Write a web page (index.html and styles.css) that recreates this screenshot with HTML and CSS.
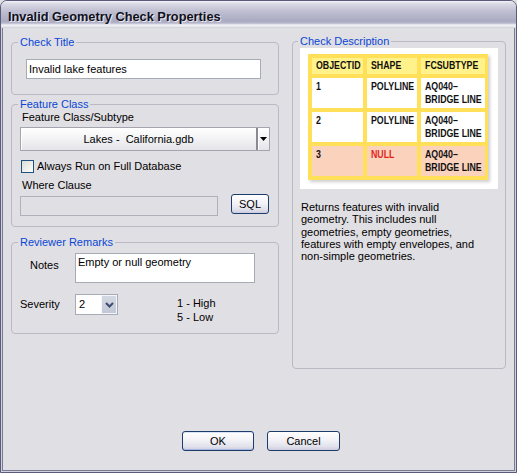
FILE: index.html
```html
<!DOCTYPE html>
<html>
<head>
<meta charset="utf-8">
<link rel="stylesheet" href="styles.css">
</head>
<body>
<div class="window">
  <div class="titlebar"><span class="title">Invalid Geometry Check Properties</span></div>
  <div class="content">
    <div class="main">
      <div class="left">
        <fieldset class="group g-title">
          <legend>Check Title</legend>
          <div class="textbox title-box">Invalid lake features</div>
        </fieldset>
        <fieldset class="group g-fc">
          <legend>Feature Class</legend>
          <div class="label fc-label">Feature Class/Subtype</div>
          <div class="combo">
            <div class="combo-main">Lakes -&nbsp; California.gdb</div>
            <div class="combo-arrow"><svg width="7" height="4" viewBox="0 0 7 4"><path d="M0 0h7L3.5 4z" fill="#000"/></svg></div>
          </div>
          <div class="check-row"><span class="checkbox"></span><span class="check-label">Always Run on Full Database</span></div>
          <div class="label where-label">Where Clause</div>
          <div class="where-row"><div class="textbox disabled"></div><div class="btn sql">SQL</div></div>
        </fieldset>
        <fieldset class="group g-rr">
          <legend>Reviewer Remarks</legend>
          <div class="notes-row"><span class="label notes-label">Notes</span><div class="textbox notes">Empty or null geometry</div></div>
          <div class="sev-row">
            <span class="label sev-label">Severity</span>
            <div class="select"><span class="select-val">2</span><span class="select-btn"><svg width="9" height="6" viewBox="0 0 9 6"><path d="M1 1l3.5 3.5L8 1" fill="none" stroke="#3c4c6c" stroke-width="2"/></svg></span></div>
            <div class="scale"><div>1 - High</div><div>5 - Low</div></div>
          </div>
        </fieldset>
      </div>
      <div class="right">
        <fieldset class="group g-desc">
          <legend>Check Description</legend>
          <div class="pic">
            <div class="ytable">
              <div class="yc h"><span class="yt">OBJECTID</span></div><div class="yc h"><span class="yt">SHAPE</span></div><div class="yc h"><span class="yt">FCSUBTYPE</span></div>
              <div class="yc"><span class="yt">1</span></div><div class="yc"><span class="yt">POLYLINE</span></div><div class="yc"><span class="yt">AQ040–<br>BRIDGE LINE</span></div>
              <div class="yc"><span class="yt">2</span></div><div class="yc"><span class="yt">POLYLINE</span></div><div class="yc"><span class="yt">AQ040–<br>BRIDGE LINE</span></div>
              <div class="yc n"><span class="yt">3</span></div><div class="yc n red"><span class="yt">NULL</span></div><div class="yc n"><span class="yt">AQ040–<br>BRIDGE LINE</span></div>
            </div>
          </div>
          <p class="desc">Returns features with invalid<br>geometry. This includes null<br>geometries, empty geometries,<br>features with empty envelopes, and<br>non-simple geometries.</p>
        </fieldset>
      </div>
    </div>
    <div class="buttons"><div class="btn dlg default">OK</div><div class="btn dlg">Cancel</div></div>
  </div>
</div>
</body>
</html>
```
FILE: styles.css
```css
* { box-sizing: border-box; }
html, body { margin: 0; padding: 0; background: #e0dfe3; }
body { font-family: "Liberation Sans", Arial, sans-serif; font-size: 11px; color: #000; }

.window {
  width: 517px; height: 473px;
  border: 1px solid #5a5a7a;
  border-radius: 7px 7px 0 0;
  background: #d2d2de;
  display: flex; flex-direction: column;
  overflow: hidden;
}
.titlebar {
  height: 27px;
  padding: 5px 0 0 7px;
  background: linear-gradient(to bottom, #f2f2f6 0, #d8d8e4 3px, #c0c0d2 10px, #aaaac2 20px, #b4b4ca 22px, #f2f2f6 24px, #e2e2ea 26px, #c8c8d6 27px);
}
.title {
  font-weight: bold; font-size: 12.8px; line-height: 21px;
  color: #10101c; text-shadow: 1px 1px 0 #eaeaf0;
}
.content {
  flex: 1;
  margin: 0 1px 1px 1px;
  border: 1px solid #7a7a96; border-top: none;
  background: #e0dfe3;
  padding: 7px 8px 0 8px;
  display: flex; flex-direction: column;
}
.main { display: flex; gap: 12px; }
.left { width: 269px; display: flex; flex-direction: column; }
.right { width: 214px; }

.group {
  margin: 0; min-width: 0;
  border: 1px solid #bcb8c4; border-radius: 4px;
  padding: 0 8px;
  width: 268px;
}
.group legend {
  color: #0a46d6; padding: 0 2px; margin-left: -2px;
  line-height: 13px; font-size: 11px;
}
.label { line-height: 13px; }

.textbox {
  background: #fff; border: 1px solid #a5acb5;
  line-height: 18px; padding: 0 2px;
}

.g-title { margin-top: 1px; padding-bottom: 15px; }
.title-box { width: 235px; height: 20px; margin: 10px 0 0 6px; }

.g-fc { margin-top: 3px; padding-top: 0; padding-bottom: 10px; }
.fc-label { margin: 0 0 0 2px; }
.combo {
  margin-top: 3px; width: 250px; height: 24px; display: flex;
  border: 1px solid #a4a4ae;
  background: linear-gradient(to bottom, #ffffff, #f4f4f6 45%, #e4e4ea);
  box-shadow: inset 1px 1px 0 #fff;
}
.combo-main { flex: 1; text-align: center; line-height: 22px; }
.combo-arrow {
  width: 13px; border-left: 2px solid #8a8a92;
  display: flex; align-items: center; justify-content: center;
  box-shadow: inset 1px 0 0 #fff;
}
.check-row { margin-top: 9px; display: flex; align-items: center; height: 13px; }
.checkbox {
  width: 13px; height: 13px; margin-left: 1px;
  border: 1px solid #1c5180;
  background: linear-gradient(135deg, #dcdcd6, #fdfdfb);
}
.check-label { margin-left: 3px; line-height: 13px; }
.where-label { margin: 6px 0 0 2px; }
.where-row { display: flex; align-items: flex-start; margin-top: 2px; }
.disabled { width: 198px; height: 20px; margin-top: 2px; background: #e0dfe3; border-color: #b2b0ba; }
.btn {
  border: 1px solid #1c3c6c; border-radius: 3px;
  background: linear-gradient(to bottom, #ffffff 0, #f4f4f8 40%, #e2e2ec 80%, #cdcde0 100%);
  text-align: center; line-height: 18px;
}
.sql { width: 38px; height: 20px; margin-left: 13px; }

.g-rr { margin-top: 9px; padding-bottom: 9px; }
.notes-row { display: flex; align-items: flex-start; margin-top: 4px; }
.notes-label { width: 55px; padding-left: 10px; margin-top: 6px; }
.notes { width: 180px; height: 30px; line-height: 14px; padding: 1px 2px; }
.sev-row { display: flex; align-items: flex-start; margin-top: 11px; }
.sev-label { width: 55px; margin-top: 4px; }
.select {
  width: 43px; height: 21px; display: flex;
  border: 1px solid #a5acb5; background: #fff;
}
.select-val { flex: 1; padding-left: 3px; line-height: 19px; }
.select-btn {
  width: 16px;
  background: linear-gradient(to bottom, #d4d8e2, #c2c8d6);
  border: 1px solid #f4f6fa;
  display: flex; align-items: center; justify-content: center;
}
.scale { margin: 2px 0 0 59px; line-height: 14px; }

.g-desc { width: 214px; height: 334px; padding: 0 7px; }
.pic { width: 198px; height: 141px; background: #fff; padding: 6px 0 0 8px; }
.ytable {
  width: 180px; height: 126px;
  display: grid;
  grid-template-columns: 51px 50px 64px;
  grid-template-rows: 16px 30px 30px 30px;
  gap: 4px;
  padding: 4px 3px 4px 4px;
  background: #ffe058;
  box-shadow: 2px 2px 3px rgba(60,60,60,0.25);
}
.yc {
  background: #fff;
  font-weight: bold; font-size: 11px; line-height: 13px;
  padding: 2px 0 0 4px; white-space: nowrap; color: #111;
}
.yt { display: inline-block; transform: scaleX(0.8); transform-origin: left top; }
.yc.h { background: #fff28a; padding-top: 1px; }
.yc.n { background: #fbd3bd; }
.yc.red { color: #e0241c; }
.desc { margin: 12px 0 0 1px; line-height: 12.25px; }

.buttons { display: flex; justify-content: center; gap: 13px; padding-left: 5px; margin-top: 62px; }
.dlg { width: 72px; height: 20px; }
.dlg + .dlg { width: 73px; }
.default { box-shadow: inset 0 -1px 0 #a8b8e0, inset 0 1px 0 #d8e2f8; }
```
